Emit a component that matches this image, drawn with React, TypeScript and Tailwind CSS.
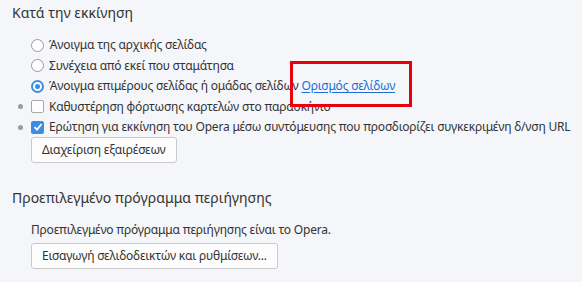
import React from "react";

const font = { fontFamily: '"Noto Sans", "Open Sans", sans-serif' };

function Radio({ checked = false }: { checked?: boolean }) {
  return checked ? (
    <span className="flex h-[13px] w-[13px] shrink-0 items-center justify-center rounded-full bg-[#3b8de3]">
      <span className="flex h-[9px] w-[9px] items-center justify-center rounded-full bg-white">
        <span className="h-[5px] w-[5px] rounded-full bg-[#3b8de3]" />
      </span>
    </span>
  ) : (
    <span className="h-[13px] w-[13px] shrink-0 rounded-full border border-[#9a9a9a] bg-white" />
  );
}

function Checkbox({ checked = false }: { checked?: boolean }) {
  return checked ? (
    <span className="flex h-[13px] w-[13px] shrink-0 items-center justify-center rounded-[2px] bg-[#3b8de3]">
      <svg width="10" height="10" viewBox="0 0 10 10">
        <path d="M1.5 5.2 L4 7.6 L8.6 2" fill="none" stroke="white" strokeWidth="1.8" />
      </svg>
    </span>
  ) : (
    <span className="h-[13px] w-[13px] shrink-0 rounded-[2px] border border-[#a8a8a8] bg-white" />
  );
}

function Row({
  control,
  modified = false,
  children,
}: {
  control: React.ReactNode;
  modified?: boolean;
  children: React.ReactNode;
}) {
  return (
    <div className="flex h-[20.5px] items-center pl-[12px]">
      <div className="flex w-[19px] shrink-0 items-center pl-[6px]">
        {modified && <span className="h-[5px] w-[5px] rounded-full bg-[#9c9c9c]" />}
      </div>
      {control}
      <span className="ml-[5px] whitespace-nowrap">{children}</span>
    </div>
  );
}

function Button({ children }: { children: React.ReactNode }) {
  return (
    <button
      type="button"
      className="h-[26px] whitespace-nowrap rounded-[3px] border border-[#c9c9c9] bg-[#fdfdfd] px-[10px] text-[12px] tracking-[-0.2px] text-[#333]"
    >
      {children}
    </button>
  );
}

export default function App() {
  return (
    <div
      className="relative h-[282px] w-[582px] overflow-hidden bg-[#f5f6f9] text-[12px] tracking-[-0.2px] text-[#333]"
      style={font}
    >
      <h2 className="pl-[12px] pt-[1px] text-[14px] leading-[24px] tracking-normal text-[#333]">
        Κατά την εκκίνηση
      </h2>

      <div className="mt-[10px]">
        <Row control={<Radio />}>Άνοιγμα της αρχικής σελίδας</Row>
        <Row control={<Radio />}>Συνέχεια από εκεί που σταμάτησα</Row>
        <Row control={<Radio checked />}>
          Άνοιγμα επιμέρους σελίδας ή ομάδας σελίδων{" "}
          <a href="#" className="text-[#1a6fd6] underline underline-offset-2">
            Ορισμός σελίδων
          </a>
        </Row>
        <Row control={<Checkbox />} modified>
          Καθυστέρηση φόρτωσης καρτελών στο παρασκήνιο
        </Row>
        <Row control={<Checkbox checked />} modified>
          Ερώτηση για εκκίνηση του Opera μέσω συντόμευσης που προσδιορίζει συγκεκριμένη δ/νση URL
        </Row>
        <div className="-mt-[1px] pl-[31px]">
          <Button>Διαχείριση εξαιρέσεων</Button>
        </div>
      </div>

      <h2 className="mt-[23px] pl-[12px] text-[14px] leading-[24px] tracking-normal text-[#333]">
        Προεπιλεγμένο πρόγραμμα περιήγησης
      </h2>
      <p className="mt-[11px] pl-[31px] leading-[18px]">
        Προεπιλεγμένο πρόγραμμα περιήγησης είναι το Opera.
      </p>
      <div className="mt-[4px] pl-[31px]">
        <Button>Εισαγωγή σελιδοδεικτών και ρυθμίσεων...</Button>
      </div>

      <div className="pointer-events-none absolute left-[290px] top-[61px] h-[46px] w-[122px] border-[3px] border-[#e8000b]" />
    </div>
  );
}
